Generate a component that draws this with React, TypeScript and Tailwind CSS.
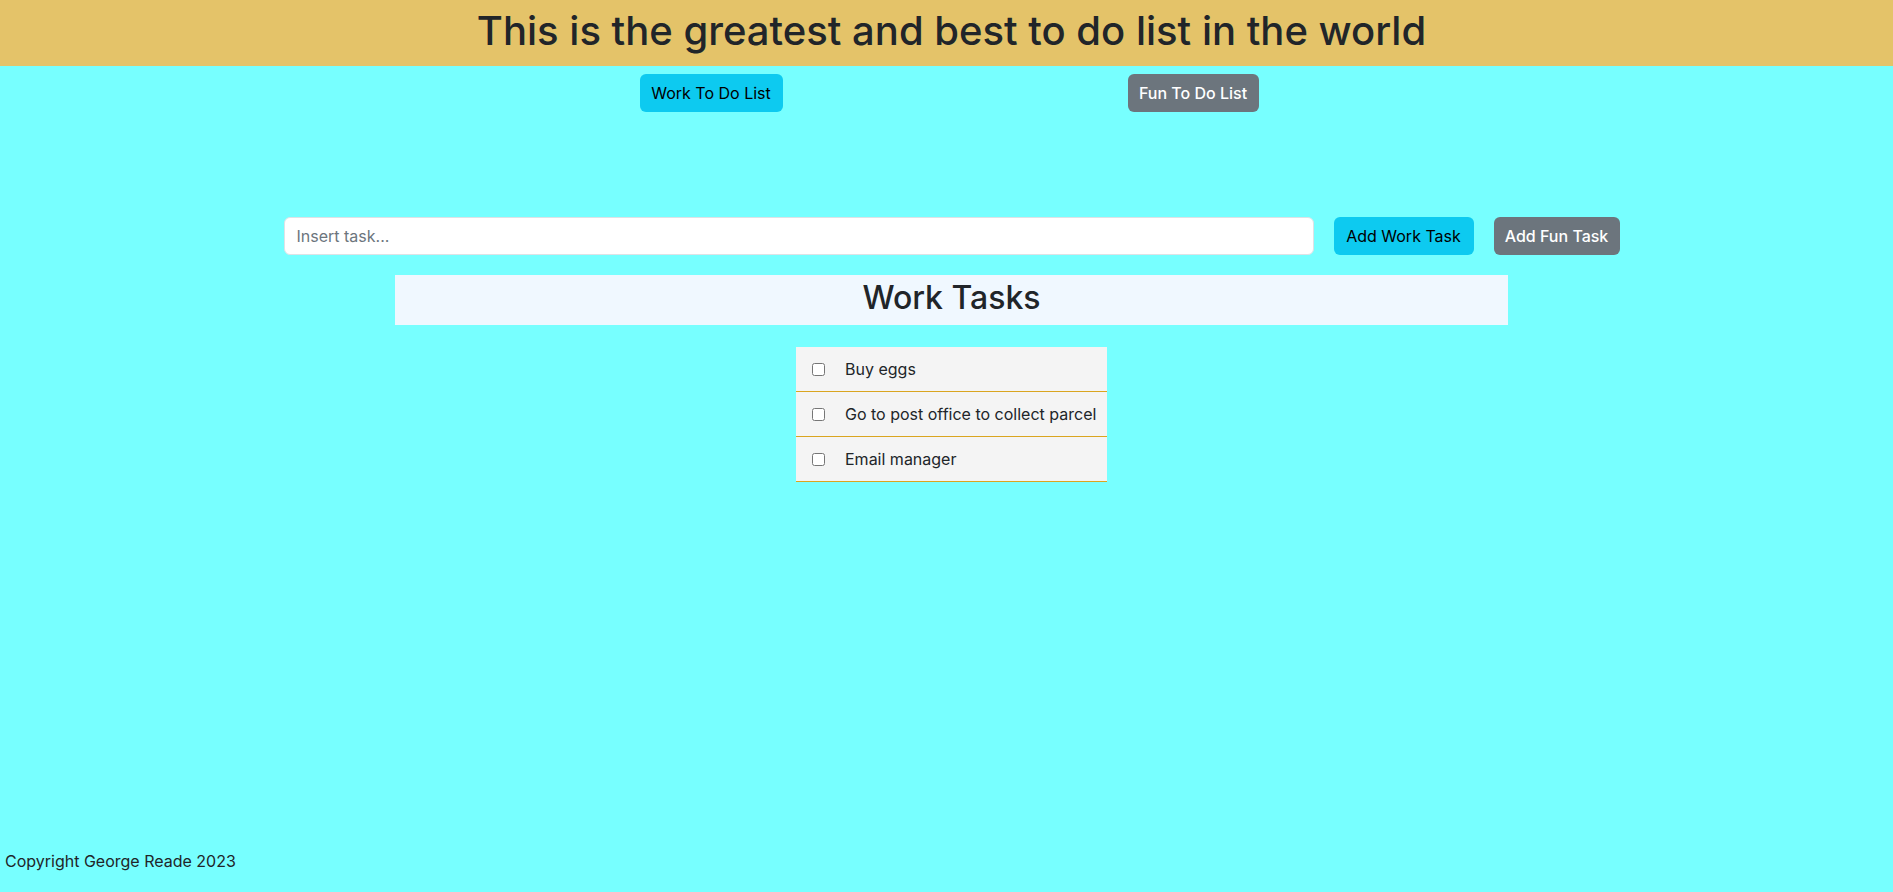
import React, { useState } from 'react';

type Task = { id: number; text: string; done: boolean };

const initialWork: Task[] = [
  { id: 1, text: 'Buy eggs', done: false },
  { id: 2, text: 'Go to post office to collect parcel', done: false },
  { id: 3, text: 'Email manager', done: false },
];

const App: React.FC = () => {
  const [tasks, setTasks] = useState<Task[]>(initialWork);
  const [input, setInput] = useState('');

  const toggle = (id: number) =>
    setTasks(tasks.map(t => (t.id === id ? { ...t, done: !t.done } : t)));

  return (
    <div className="h-screen flex flex-col bg-[#77ffff] text-[#212529] font-['Inter',sans-serif]">
      {/* header */}
      <header className="h-[66px] shrink-0 bg-[#e4c369] pt-[7px] pl-[10px]">
        <h1 className="text-center text-[40px] leading-[1.2] font-medium">
          This is the greatest and best to do list in the world
        </h1>
      </header>

      <main className="flex-1 pl-[10px]">
        {/* list switch */}
        <div className="flex justify-center gap-[345px] mt-2 pr-[5px]">
          <button className="h-[38px] w-[143px] rounded-md bg-[#0dcaf0] text-black text-base">
            Work To Do List
          </button>
          <button className="h-[38px] w-[131px] rounded-md bg-[#6c757d] text-white text-base font-medium">
            Fun To Do List
          </button>
        </div>

        {/* input row */}
        <div className="flex justify-center gap-5 mt-[105px]">
          <input
            value={input}
            onChange={e => setInput(e.target.value)}
            placeholder="Insert task..."
            className="h-[38px] w-[1030px] rounded-md bg-white border border-[#dee2e6] px-3 text-base placeholder:text-[#6c757d] outline-none"
          />
          <button className="h-[38px] w-[140px] rounded-md bg-[#0dcaf0] text-black text-base">
            Add Work Task
          </button>
          <button className="h-[38px] w-[126px] rounded-md bg-[#6c757d] text-white text-base font-medium">
            Add Fun Task
          </button>
        </div>

        {/* tasks heading */}
        <div className="flex justify-center mt-[20px]">
          <div className="w-[1113px] h-[50px] bg-[#f0f8ff] pt-[4px]">
            <h2 className="text-center text-[32px] leading-[1.2] font-medium">Work Tasks</h2>
          </div>
        </div>

        {/* task list */}
        <div className="flex justify-center mt-[22px]">
          <ul className="w-[311px]">
            {tasks.map(t => (
              <li
                key={t.id}
                className="h-[45px] flex items-center bg-[#f4f4f4] border-b border-[#daa520] pl-4 whitespace-nowrap"
              >
                <input
                  type="checkbox"
                  checked={t.done}
                  onChange={() => toggle(t.id)}
                  className="m-0 w-[13px] h-[13px]"
                />
                <span className="ml-5 text-base">{t.text}</span>
              </li>
            ))}
          </ul>
        </div>
      </main>

      <footer className="pl-[5px] pb-[19px] text-base leading-6">Copyright George Reade 2023</footer>
    </div>
  );
};

export default App;
